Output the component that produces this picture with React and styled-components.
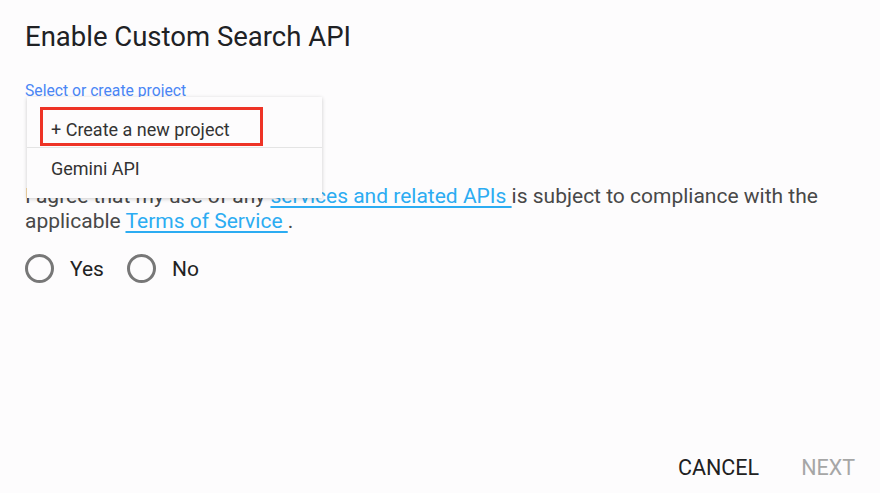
import React, { useState } from "react";
import styled, { createGlobalStyle } from "styled-components";

const GlobalStyle = createGlobalStyle`
  html, body {
    margin: 0;
    padding: 0;
    background: #fdfcfd;
  }
  body {
    font-family: Roboto, "Liberation Sans", Arial, sans-serif;
  }
`;

const projects = ["Gemini API"];

const App = () => {
  const [agree, setAgree] = useState(null);

  return (
    <>
      <GlobalStyle />
      <Dialog>
        <Title>Enable Custom Search API</Title>
        <Field>
          <FieldLabel>Select or create project</FieldLabel>
          <Menu>
            <CreateItem>
              <Highlight>+ Create a new project</Highlight>
            </CreateItem>
            {projects.map((p) => (
              <MenuItem key={p}>{p}</MenuItem>
            ))}
          </Menu>
        </Field>
        <Terms>
          I agree that my use of any <Link href="#">services and related APIs </Link>
          is subject to compliance with the applicable{" "}
          <Link href="#">Terms of Service </Link> .
        </Terms>
        <RadioRow>
          <RadioOption onClick={() => setAgree(true)}>
            <Circle $checked={agree === true} />
            Yes
          </RadioOption>
          <RadioOption onClick={() => setAgree(false)}>
            <Circle $checked={agree === false} />
            No
          </RadioOption>
        </RadioRow>
        <Footer>
          <TextButton>CANCEL</TextButton>
          <TextButton $disabled>NEXT</TextButton>
        </Footer>
      </Dialog>
    </>
  );
};

const Dialog = styled.div`
  display: flex;
  flex-direction: column;
  height: 100vh;
  box-sizing: border-box;
  padding: 21px 25px 12px 25px;
`;

const Title = styled.h1`
  margin: 0;
  font-size: 27.5px;
  line-height: 31px;
  font-weight: 400;
  color: #202124;
`;

const Field = styled.div`
  position: relative;
  margin-top: 30px;
  height: 102px;
  z-index: 2;
`;

const FieldLabel = styled.div`
  font-size: 15.7px;
  line-height: 18px;
  color: #4a86f5;
`;

const Menu = styled.ul`
  position: absolute;
  top: 15px;
  left: 2px;
  width: 295px;
  margin: 0;
  padding: 10px 0;
  list-style: none;
  background: #fdfcfd;
  box-shadow: 0 1px 4px rgba(0, 0, 0, 0.2);
  font-size: 18px;
  color: #333;
`;

const CreateItem = styled.li`
  display: flex;
  align-items: flex-start;
  height: 41px;
  box-sizing: border-box;
  padding-left: 13px;
  border-bottom: 1px solid #e4e4e4;
`;

const Highlight = styled.span`
  display: flex;
  align-items: center;
  box-sizing: border-box;
  width: 223px;
  height: 39px;
  padding: 5px 0 0 8px;
  border: 3px solid #ee3326;
`;

const MenuItem = styled.li`
  display: flex;
  align-items: center;
  height: 40px;
  padding-left: 24px;
`;

const Terms = styled.p`
  margin: 0;
  font-size: 21px;
  line-height: 25px;
  color: #484848;
`;

const Link = styled.a`
  color: #2cacf2;
  text-decoration: underline;
  text-underline-offset: 3px;
  text-decoration-thickness: 2px;
`;

const RadioRow = styled.div`
  display: flex;
  gap: 23px;
  margin-top: 20px;
`;

const RadioOption = styled.label`
  display: flex;
  align-items: center;
  gap: 16px;
  font-size: 21px;
  color: #222;
  cursor: pointer;
`;

const Circle = styled.span`
  width: 29px;
  height: 29px;
  box-sizing: border-box;
  border-radius: 50%;
  border: 3px solid #777;
  background: ${(p) => (p.$checked ? "radial-gradient(#777 40%, transparent 42%)" : "transparent")};
`;

const Footer = styled.div`
  display: flex;
  justify-content: flex-end;
  gap: 42px;
  margin-top: auto;
`;

const TextButton = styled.button`
  border: none;
  background: none;
  padding: 0;
  font-family: Roboto, "Liberation Sans", Arial, sans-serif;
  font-size: 21.5px;
  line-height: 26px;
  color: ${(p) => (p.$disabled ? "#a6a6a6" : "#212121")};
  cursor: ${(p) => (p.$disabled ? "default" : "pointer")};
`;

export default App;
